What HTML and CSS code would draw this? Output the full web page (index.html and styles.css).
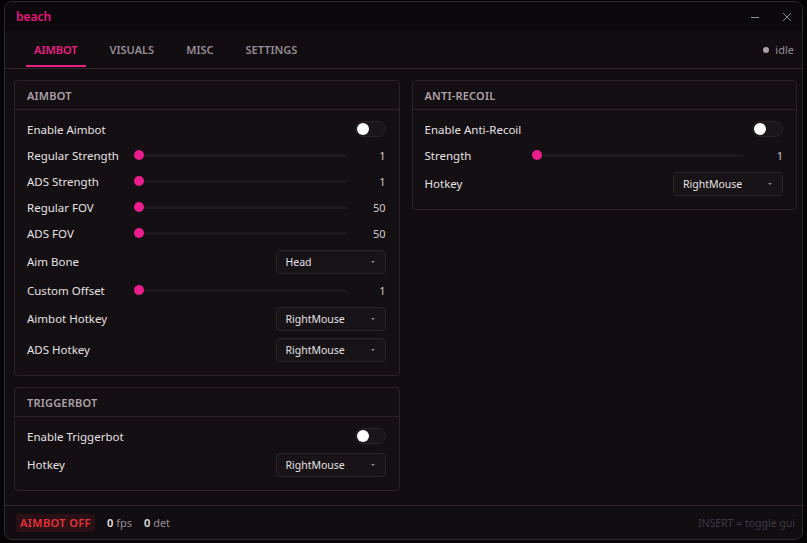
FILE: index.html
```html
<!DOCTYPE html>
<html lang="en">
  <head>
    <meta charset="UTF-8" />
    <title>beach</title>
    <link rel="stylesheet" href="styles.css">
  </head>
  <body>
    <div class="window">
      <div class="titlebar">
        <span class="app-name">beach</span>
        <div class="win-controls">
          <svg class="win-btn" width="10" height="10" viewBox="0 0 10 10"><path d="M1 5.5h8" stroke="#8f8c9a" stroke-width="1"/></svg>
          <svg class="win-btn" width="10" height="10" viewBox="0 0 10 10"><path d="M1 1l8 8M9 1l-8 8" stroke="#8f8c9a" stroke-width="1"/></svg>
        </div>
      </div>

      <div class="tabbar">
        <div class="tabs">
          <div class="tab active">AIMBOT</div>
          <div class="tab">VISUALS</div>
          <div class="tab">MISC</div>
          <div class="tab">SETTINGS</div>
        </div>
        <div class="status"><span class="status-dot"></span>idle</div>
      </div>

      <div class="content">
        <div class="column">
          <div class="panel">
            <div class="panel-head">AIMBOT</div>
            <div class="panel-body">
              <div class="row">
                <span class="label">Enable Aimbot</span>
                <span class="toggle"><span class="knob"></span></span>
              </div>
              <div class="row">
                <span class="label">Regular Strength</span>
                <span class="slider"><span class="dot"></span></span>
                <span class="value">1</span>
              </div>
              <div class="row">
                <span class="label">ADS Strength</span>
                <span class="slider"><span class="dot"></span></span>
                <span class="value">1</span>
              </div>
              <div class="row">
                <span class="label">Regular FOV</span>
                <span class="slider"><span class="dot"></span></span>
                <span class="value">50</span>
              </div>
              <div class="row">
                <span class="label">ADS FOV</span>
                <span class="slider"><span class="dot"></span></span>
                <span class="value">50</span>
              </div>
              <div class="row select-row">
                <span class="label">Aim Bone</span>
                <span class="select">Head<span class="caret"></span></span>
              </div>
              <div class="row">
                <span class="label">Custom Offset</span>
                <span class="slider"><span class="dot"></span></span>
                <span class="value">1</span>
              </div>
              <div class="row select-row">
                <span class="label">Aimbot Hotkey</span>
                <span class="select">RightMouse<span class="caret"></span></span>
              </div>
              <div class="row select-row">
                <span class="label">ADS Hotkey</span>
                <span class="select">RightMouse<span class="caret"></span></span>
              </div>
            </div>
          </div>

          <div class="panel">
            <div class="panel-head">TRIGGERBOT</div>
            <div class="panel-body">
              <div class="row">
                <span class="label">Enable Triggerbot</span>
                <span class="toggle"><span class="knob"></span></span>
              </div>
              <div class="row select-row">
                <span class="label">Hotkey</span>
                <span class="select">RightMouse<span class="caret"></span></span>
              </div>
            </div>
          </div>
        </div>

        <div class="column">
          <div class="panel">
            <div class="panel-head">ANTI-RECOIL</div>
            <div class="panel-body">
              <div class="row">
                <span class="label">Enable Anti-Recoil</span>
                <span class="toggle"><span class="knob"></span></span>
              </div>
              <div class="row">
                <span class="label">Strength</span>
                <span class="slider"><span class="dot"></span></span>
                <span class="value">1</span>
              </div>
              <div class="row select-row">
                <span class="label">Hotkey</span>
                <span class="select">RightMouse<span class="caret"></span></span>
              </div>
            </div>
          </div>
        </div>
      </div>

      <div class="footer">
        <span class="badge">AIMBOT OFF</span>
        <span class="stat"><b>0</b> fps</span>
        <span class="stat"><b>0</b> det</span>
        <span class="hint">INSERT = toggle gui</span>
      </div>
    </div>
  </body>
</html>
```

FILE: styles.css
```css
body {
  margin: 0;
  padding: 1px 4px 0 4px;
  background-color: #050505;
  font-family: "Noto Sans", "Open Sans", sans-serif;
  font-size: 11.5px;
  color: #e6e1e4;
}
.window {
  width: 799px;
  height: 539px;
  box-sizing: border-box;
  border: 1px solid #2c2a2d;
  border-radius: 8px;
  background-color: #110d10;
  display: flex;
  flex-direction: column;
  overflow: hidden;
}
.titlebar {
  height: 29px;
  flex-shrink: 0;
  background-color: #0b090c;
  display: flex;
  align-items: center;
  justify-content: space-between;
  padding: 0 10px 0 11px;
}
.app-name {
  color: #e8177f;
  font-weight: 600;
  font-size: 12px;
}
.win-controls {
  display: flex;
  gap: 22px;
  align-items: center;
}
.win-btn {
  display: block;
}
.tabbar {
  height: 38px;
  flex-shrink: 0;
  box-sizing: border-box;
  border-bottom: 1px solid #33252c;
  display: flex;
  align-items: stretch;
  justify-content: space-between;
  padding: 0 8px 0 21px;
}
.tabs {
  display: flex;
  gap: 16px;
}
.tab {
  padding: 3px 8px 0 8px;
  display: flex;
  align-items: center;
  font-size: 11px;
  font-weight: 600;
  color: #958c96;
  border-bottom: 2px solid transparent;
  margin-bottom: 1px;
}
.tab.active {
  color: #ec1f86;
  border-bottom-color: #ec1f86;
}
.status {
  display: flex;
  align-items: center;
  gap: 6px;
  color: #958c96;
  font-size: 11px;
}
.status-dot {
  width: 6px;
  height: 6px;
  border-radius: 50%;
  background-color: #aaa2aa;
}
.content {
  flex: 1;
  display: grid;
  grid-template-columns: 1fr 1fr;
  gap: 12px;
  align-items: start;
  padding: 11px 5px 0 9px;
}
.column {
  display: flex;
  flex-direction: column;
  gap: 11px;
}
.panel {
  background-color: #140f12;
  border: 1px solid #2a2226;
  border-radius: 4px;
}
.panel-head {
  height: 28px;
  border-bottom: 1px solid #2a2226;
  display: flex;
  align-items: center;
  padding-left: 12px;
  font-size: 11px;
  font-weight: 600;
  letter-spacing: 0.2px;
  color: #aea1a9;
}
.panel-body {
  padding: 9px 13px 13px 12px;
  display: flex;
  flex-direction: column;
  gap: 6px;
}
.row {
  min-height: 20px;
  display: flex;
  align-items: center;
}
.select-row {
  min-height: 25px;
}
.label {
  width: 107px;
  flex-shrink: 0;
  margin-right: auto;
}
.toggle {
  width: 31px;
  height: 16px;
  box-sizing: border-box;
  border: 1px solid #28222a;
  border-radius: 8px;
  background-color: #1a1519;
  display: flex;
  align-items: center;
  padding-left: 1px;
}
.knob {
  width: 12px;
  height: 12px;
  border-radius: 50%;
  background-color: #ffffff;
}
.slider {
  flex: 1;
  height: 3px;
  background-color: #1d181c;
  border-radius: 2px;
  position: relative;
}
.dot {
  position: absolute;
  left: 0;
  top: -4px;
  width: 10px;
  height: 10px;
  border-radius: 50%;
  background-color: #e91e8c;
}
.value {
  width: 39px;
  text-align: right;
  color: #cfc7cc;
  font-size: 11px;
}
.select {
  width: 110px;
  height: 24px;
  box-sizing: border-box;
  border: 1px solid #2a2327;
  border-radius: 4px;
  background-color: #181316;
  display: flex;
  align-items: center;
  justify-content: space-between;
  padding: 0 10px 0 9px;
  font-size: 10.5px;
  color: #e6e1e4;
}
.caret {
  width: 0;
  height: 0;
  border-left: 2px solid transparent;
  border-right: 2px solid transparent;
  border-top: 2px solid #8c848a;
}
.footer {
  height: 33px;
  flex-shrink: 0;
  border-top: 1px solid #33252c;
  display: flex;
  align-items: center;
  gap: 12px;
  padding: 0 7px 0 11px;
}
.badge {
  height: 18px;
  width: 79px;
  box-sizing: border-box;
  background-color: #2a1116;
  border-radius: 3px;
  color: #e8313b;
  font-size: 11px;
  font-weight: 600;
  letter-spacing: 0.4px;
  display: flex;
  align-items: center;
  justify-content: center;
}
.stat {
  color: #968e98;
  font-size: 11px;
}
.stat b {
  color: #e6e1e4;
  font-weight: 600;
}
.hint {
  margin-left: auto;
  color: #3d3a48;
  font-size: 10.5px;
}
```
